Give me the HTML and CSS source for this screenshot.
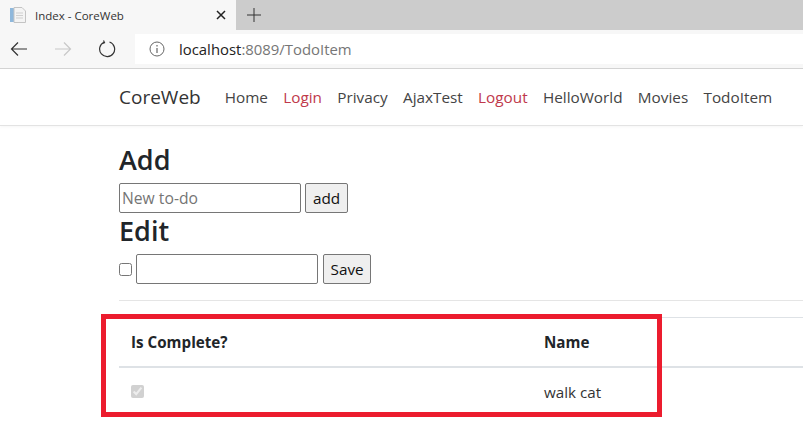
FILE: index.html
```html
<!DOCTYPE html>
<html lang="en">
<head>
    <meta charset="utf-8">
    <title>Index - CoreWeb</title>
    <link rel="stylesheet" href="styles.css">
</head>
<body>
    <div class="tabstrip">
        <div class="tab">
            <svg class="favicon" width="18" height="18" viewBox="0 0 18 18">
                <rect x="1" y="2" width="4" height="14" fill="#8fb8dc"/>
                <path d="M5 1.5h8l3.5 3.5v11.500h-11.500z" fill="#f4f4f4" stroke="#c4c4c4"/>
                <path d="M7 7h7M7 9.500h7M7 12h7" stroke="#cfcfcf"/>
            </svg>
            <span class="tab-title">Index - CoreWeb</span>
            <svg class="tab-close" width="10" height="10" viewBox="0 0 10 10">
                <path d="M1 1l8 8M9 1l-8 8" stroke="#222" stroke-width="1.500"/>
            </svg>
        </div>
        <svg class="tab-new" width="14" height="14" viewBox="0 0 14 14">
            <path d="M7 0v14M0 7h14" stroke="#333" stroke-width="1"/>
        </svg>
    </div>
    <div class="toolbar">
        <svg class="tool tool-back" width="18" height="16" viewBox="0 0 18 16">
            <path d="M17 8H1.500M8 1.500L1.500 8 8 14.500" fill="none" stroke="#333" stroke-width="1.200"/>
        </svg>
        <svg class="tool tool-forward" width="18" height="16" viewBox="0 0 18 16">
            <path d="M1 8h15.500M10 1.500L16.500 8 10 14.500" fill="none" stroke="#c8c8c8" stroke-width="1.200"/>
        </svg>
        <svg class="tool tool-reload" width="18" height="18" viewBox="0 0 18 18">
            <path d="M6 2.300A7.500 7.500 0 1 0 11.500 2M5.500 0.500L6.500 2.600 4 3.800" fill="none" stroke="#333" stroke-width="1.200"/>
        </svg>
        <div class="address">
            <svg class="info" width="16" height="16" viewBox="0 0 16 16">
                <circle cx="8" cy="8" r="7" fill="none" stroke="#666" stroke-width="1"/>
                <path d="M8 7v5M8 4v1.500" stroke="#666" stroke-width="1.200"/>
            </svg>
            <span class="url"><span class="url-host">localhost</span>:8089/TodoItem</span>
        </div>
    </div>
    <nav class="navbar">
        <a class="brand">CoreWeb</a>
        <a class="nav-link">Home</a>
        <a class="nav-link danger">Login</a>
        <a class="nav-link">Privacy</a>
        <a class="nav-link">AjaxTest</a>
        <a class="nav-link danger">Logout</a>
        <a class="nav-link">HelloWorld</a>
        <a class="nav-link">Movies</a>
        <a class="nav-link">TodoItem</a>
    </nav>
    <main class="container">
        <h3 class="heading">Add</h3>
        <form class="row">
            <input class="text-input" type="text" placeholder="New to-do">
            <button class="btn" type="button">add</button>
        </form>
        <h3 class="heading">Edit</h3>
        <form class="row">
            <input class="check" type="checkbox">
            <input class="text-input" type="text">
            <button class="btn btn-save" type="button">Save</button>
        </form>
        <hr class="divider">
        <table class="table">
            <thead>
                <tr>
                    <th class="col-complete">Is Complete?</th>
                    <th>Name</th>
                </tr>
            </thead>
            <tbody>
                <tr>
                    <td><input class="check" type="checkbox" checked disabled></td>
                    <td>walk cat</td>
                </tr>
            </tbody>
        </table>
    </main>
    <div class="highlight"></div>
</body>
</html>
```

FILE: styles.css
```css
html, body {
    margin: 0;
    padding: 0;
    height: 425px;
    overflow: hidden;
    background: #fff;
    font-family: "Open Sans", "Noto Sans", Arial, sans-serif;
    color: #212529;
}

.tabstrip {
    display: flex;
    align-items: center;
    height: 30px;
    background: #cccccc;
}

.tab {
    display: flex;
    align-items: center;
    width: 236px;
    height: 30px;
    box-sizing: border-box;
    padding-left: 9px;
    background: #f7f7f7;
}

.tab-title {
    margin-left: 8px;
    font-size: 11.500px;
    color: #333;
}

.tab-close {
    margin-left: auto;
    margin-right: 10px;
}

.tab-new {
    margin-left: 11px;
}

.toolbar {
    display: flex;
    align-items: center;
    height: 38px;
    background: #f7f7f7;
    border-bottom: 1px solid #d4d4d4;
}

.tool {
    flex: none;
}

.tool-back {
    margin-left: 10px;
}

.tool-forward {
    margin-left: 26px;
}

.tool-reload {
    margin-left: 26px;
}

.address {
    display: flex;
    align-items: center;
    flex: 1;
    height: 30px;
    margin-left: 19px;
    padding-left: 14px;
    background: #fff;
}

.url {
    margin-left: 14px;
    font-size: 14.900px;
    color: #767676;
}

.url-host {
    color: #222;
}

.navbar {
    display: flex;
    align-items: center;
    height: 56px;
    padding-left: 119px;
    border-bottom: 1px solid #e3e3e3;
    box-shadow: 0 1px 3px rgba(0, 0, 0, 0.04);
}

.brand {
    margin-right: 24px;
    font-size: 19px;
    color: #333;
}

.nav-link {
    margin-right: 15.300px;
    font-size: 15.300px;
    color: #444;
}

.nav-link.danger {
    color: #c0394b;
}

.container {
    padding: 16px 0 0 119px;
}

.heading {
    margin: 0;
    height: 41px;
    font-size: 27px;
    font-weight: 600;
    line-height: 36px;
}

.row {
    display: flex;
    align-items: center;
    height: 30px;
}

.text-input {
    width: 182px;
    height: 30px;
    box-sizing: border-box;
    padding: 1px 2px;
    border: 1px solid #767676;
    border-radius: 2px;
    font-family: inherit;
    font-size: 15.700px;
}

.text-input::placeholder {
    color: #757575;
}

.btn {
    height: 30px;
    margin-left: 4px;
    padding: 0 7px;
    background: #efefef;
    border: 1px solid #767676;
    border-radius: 2px;
    font-family: inherit;
    font-size: 15.300px;
    color: #111;
}

.btn-save {
    margin-left: 5px;
    padding: 0 6.500px;
}

.check {
    width: 13px;
    height: 13px;
    margin: 0 4px 0 0;
}

.divider {
    width: 684px;
    height: 1px;
    margin: 16px 0;
    border: 0;
    background: #e5e5e5;
}

.table {
    width: 684px;
    border-collapse: collapse;
    font-size: 15.200px;
    border-top: 1px solid #dee2e6;
}

.table th {
    height: 48px;
    padding: 0 12px;
    text-align: left;
    font-weight: 700;
    border-bottom: 2px solid #dee2e6;
}

.table td {
    height: 48px;
    padding: 0 12px;
    color: #333;
}

.col-complete {
    width: 389px;
}

.highlight {
    position: absolute;
    left: 101px;
    top: 314px;
    width: 551px;
    height: 93px;
    border: 5px solid #ec1c2e;
}
```
